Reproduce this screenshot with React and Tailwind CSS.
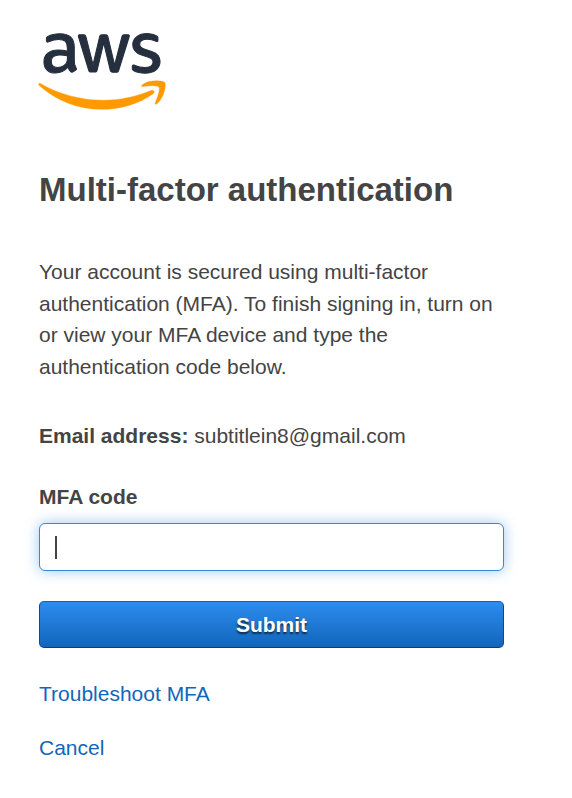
import React, { useState } from 'react';

const AwsLogo = () => (
  <svg className="-ml-px block w-[128px] h-[77px]" viewBox="0 0 304 182" aria-label="aws">
    <path
      fill="#252F3E"
      stroke="#252F3E"
      strokeWidth="2.5"
      d="M86.4,66.4c0,3.7,0.4,6.7,1.1,8.9c0.8,2.2,1.8,4.6,3.2,7.2c0.5,0.8,0.7,1.6,0.7,2.3c0,1-0.6,2-1.9,3l-6.3,4.2c-0.9,0.6-1.8,0.9-2.6,0.9c-1,0-2-0.5-3-1.4C76.2,90,75,88.4,74,86.8c-1-1.7-2-3.6-3.1-5.9c-7.8,9.2-17.6,13.8-29.4,13.8c-8.4,0-15.1-2.4-20-7.2c-4.9-4.8-7.4-11.2-7.4-19.2c0-8.5,3-15.4,9.1-20.6c6.1-5.2,14.2-7.8,24.5-7.8c3.4,0,6.9,0.3,10.6,0.8c3.7,0.5,7.5,1.3,11.5,2.2v-7.3c0-7.6-1.6-12.9-4.7-16c-3.2-3.1-8.6-4.6-16.3-4.6c-3.5,0-7.1,0.4-10.8,1.3c-3.7,0.9-7.3,2-10.8,3.4c-1.6,0.7-2.8,1.1-3.5,1.3c-0.7,0.2-1.2,0.3-1.6,0.3c-1.4,0-2.1-1-2.1-3.1v-4.9c0-1.6,0.2-2.8,0.7-3.5c0.5-0.7,1.4-1.4,2.8-2.1c3.5-1.8,7.7-3.3,12.6-4.5c4.9-1.3,10.1-1.9,15.6-1.9c11.9,0,20.6,2.7,26.2,8.1c5.5,5.4,8.3,13.6,8.3,24.6V66.4z M45.8,81.6c3.3,0,6.7-0.6,10.3-1.8c3.6-1.2,6.8-3.4,9.5-6.4c1.6-1.9,2.8-4,3.4-6.4c0.6-2.4,1-5.3,1-8.7v-4.2c-2.9-0.7-6-1.3-9.2-1.7c-3.2-0.4-6.3-0.6-9.4-0.6c-6.7,0-11.6,1.3-14.9,4c-3.3,2.7-4.9,6.5-4.9,11.5c0,4.7,1.2,8.2,3.7,10.6C37.7,80.4,41.2,81.6,45.8,81.6z M126.1,92.4c-1.8,0-3-0.3-3.8-1c-0.8-0.6-1.5-2-2.1-3.9L96.7,10.2c-0.6-2-0.9-3.3-0.9-4c0-1.6,0.8-2.5,2.4-2.5h9.8c1.9,0,3.2,0.3,3.9,1c0.8,0.6,1.4,2,2,3.9l16.8,66.2l15.6-66.2c0.5-2,1.1-3.3,1.9-3.9c0.8-0.6,2.2-1,4-1h8c1.9,0,3.2,0.3,4,1c0.8,0.6,1.5,2,1.9,3.9l15.8,67l17.3-67c0.6-2,1.3-3.3,2-3.9c0.8-0.6,2.1-1,3.9-1h9.3c1.6,0,2.5,0.8,2.5,2.5c0,0.5-0.1,1-0.2,1.6c-0.1,0.6-0.3,1.4-0.7,2.5l-24.1,77.3c-0.6,2-1.3,3.3-2.1,3.9c-0.8,0.6-2.1,1-3.8,1h-8.6c-1.9,0-3.2-0.3-4-1c-0.8-0.7-1.5-2-1.9-4L156,23l-15.4,64.4c-0.5,2-1.1,3.3-1.9,4c-0.8,0.7-2.2,1-4,1H126.1z M254.6,95.1c-5.2,0-10.4-0.6-15.4-1.8c-5-1.2-8.9-2.5-11.5-4c-1.6-0.9-2.7-1.9-3.1-2.8c-0.4-0.9-0.6-1.9-0.6-2.8v-5.1c0-2.1,0.8-3.1,2.3-3.1c0.6,0,1.2,0.1,1.8,0.3c0.6,0.2,1.5,0.6,2.5,1c3.4,1.5,7.1,2.7,11,3.5c4,0.8,7.9,1.2,11.9,1.2c6.3,0,11.2-1.1,14.6-3.3c3.4-2.2,5.2-5.4,5.2-9.5c0-2.8-0.9-5.1-2.7-7c-1.8-1.9-5.2-3.6-10.1-5.2L246,52c-7.3-2.3-12.7-5.7-16-10.2c-3.3-4.4-5-9.3-5-14.5c0-4.2,0.9-7.9,2.7-11.1c1.8-3.2,4.2-6,7.2-8.2c3-2.3,6.4-4,10.4-5.2c4-1.2,8.2-1.7,12.6-1.7c2.2,0,4.5,0.1,6.7,0.4c2.3,0.3,4.4,0.7,6.5,1.1c2,0.5,3.9,1,5.7,1.6c1.8,0.6,3.2,1.2,4.2,1.8c1.4,0.8,2.4,1.6,3,2.5c0.6,0.8,0.9,1.9,0.9,3.3v4.7c0,2.1-0.8,3.2-2.3,3.2c-0.8,0-2.1-0.4-3.8-1.2c-5.7-2.6-12.1-3.9-19.2-3.9c-5.7,0-10.2,0.9-13.3,2.8c-3.1,1.9-4.7,4.8-4.7,8.9c0,2.8,1,5.2,3,7.1c2,1.9,5.7,3.8,11,5.5l14.2,4.5c7.2,2.3,12.4,5.5,15.5,9.6c3.1,4.1,4.6,8.8,4.6,14c0,4.3-0.9,8.2-2.6,11.6c-1.8,3.4-4.2,6.4-7.3,8.8c-3.1,2.5-6.8,4.3-11.1,5.6C264.4,94.4,259.7,95.1,254.6,95.1z"
    />
    <path
      fill="#FF9900"
      stroke="#FF9900"
      strokeWidth="1"
      d="M273.5,143.7c-32.9,24.3-80.7,37.2-121.8,37.2c-57.6,0-109.5-21.3-148.7-56.7c-3.1-2.8-0.3-6.6,3.4-4.4c42.4,24.6,94.7,39.5,148.8,39.5c36.5,0,76.6-7.6,113.5-23.2C274.2,133.6,278.9,139.7,273.5,143.7z M287.2,128.1c-4.2-5.4-27.8-2.6-38.5-1.3c-3.2,0.4-3.7-2.4-0.8-4.5c18.8-13.2,49.7-9.4,53.3-5c3.6,4.5-1,35.4-18.6,50.2c-2.7,2.3-5.3,1.1-4.1-1.9C282.5,155.7,291.4,133.4,287.2,128.1z"
    />
  </svg>
);

const App = () => {
  const [code, setCode] = useState('');

  return (
    <main className="min-h-[798px] bg-white pl-[39px] pt-[33px] font-['Liberation_Sans',Arial,sans-serif] text-[21px] text-[#444]">
      <div className="w-[465px]">
        <AwsLogo />

        <h1 className="mt-[58px] text-[33px] leading-[44px] font-bold whitespace-nowrap">
          Multi-factor authentication
        </h1>

        <p className="mt-[44px] leading-[31.7px]">
          Your account is secured using multi-factor<br />
          authentication (MFA). To finish signing in, turn on<br />
          or view your MFA device and type the<br />
          authentication code below.
        </p>

        <p className="mt-[37px] leading-8">
          <b>Email address:</b> subtitlein8@gmail.com
        </p>

        <form onSubmit={(e) => e.preventDefault()}>
          <label htmlFor="mfa" className="block mt-[29px] leading-8 font-bold">MFA code</label>
          {/* Focused field */}
          <div className="mt-[10px] flex h-12 items-center rounded-[6px] border border-[#3688d8] bg-white px-[15px] shadow-[0_0_14px_rgba(42,132,220,0.45)]">
            <span className="mt-px h-[23px] w-[2px] bg-[#444]" />
            <input
              id="mfa"
              className="min-w-0 flex-1 bg-transparent caret-transparent outline-none"
              value={code}
              onChange={(e) => setCode(e.target.value)}
            />
          </div>
          <button
            type="submit"
            className="mt-[30px] block h-[47px] w-full rounded-[5px] border border-t-[#1762b0] border-x-[#0f4a87] border-b-[#0a3f78] bg-linear-to-b from-[#2d8cee] to-[#1166bb] pt-px font-bold text-white [text-shadow:0_2px_2px_rgba(0,0,0,0.65)]"
          >
            Submit
          </button>
        </form>

        <div className="mt-[30px] flex flex-col items-start gap-[22px] leading-8 text-[#1166bb]">
          <a href="#troubleshoot">Troubleshoot MFA</a>
          <a href="#cancel">Cancel</a>
        </div>
      </div>
    </main>
  );
};

export default App;
